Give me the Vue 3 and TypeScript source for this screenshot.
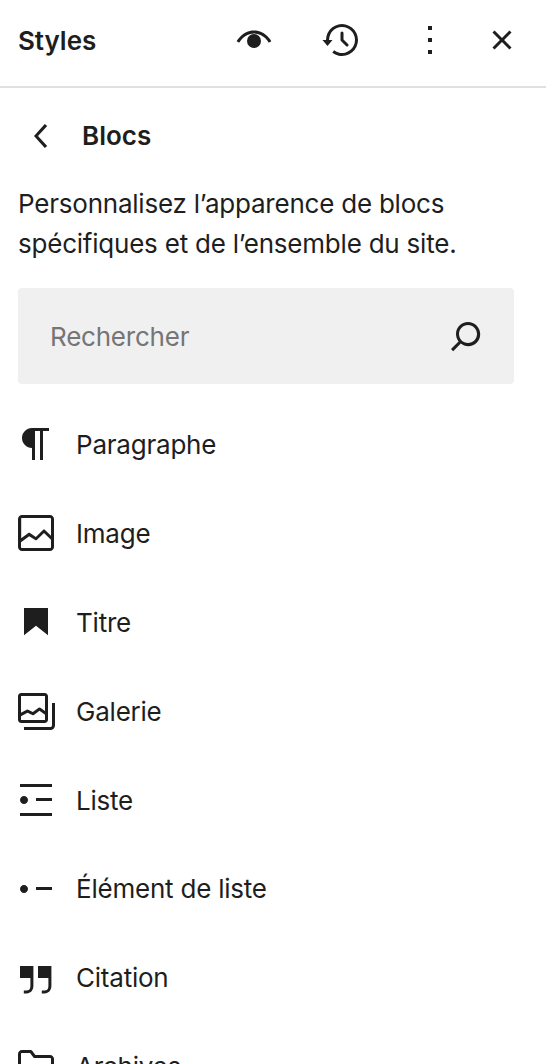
<script setup lang="ts">
interface Block { name: string; d: string }
const blocks: Block[] = [
  { name: 'Paragraphe', d: 'm9.99609 14v-.2251l.00391.0001v6.225h1.5v-14.5h2.5v14.5h1.5v-14.5h3v-1.5h-8.50391c-2.76142 0-5 2.23858-5 5 0 2.7614 2.23858 5 5 5z' },
  { name: 'Image', d: 'M19 3H5c-1.1 0-2 .9-2 2v14c0 1.1.9 2 2 2h14c1.1 0 2-.9 2-2V5c0-1.1-.9-2-2-2zM5 4.5h14c.3 0 .5.2.5.5v8.4l-3-2.9c-.3-.3-.8-.3-1 0L11.9 14 9 12c-.3-.2-.6-.2-.8 0l-3.6 2.6V5c-.1-.3.1-.5.4-.5zm14 15H5c-.3 0-.5-.2-.5-.5v-2.4l4.1-3 3 1.9c.3.2.7.2.9-.1L16 12l3.5 3.4V19c0 .3-.2.5-.5.5z' },
  { name: 'Titre', d: 'M6 5V18.5911L12 13.8473L18 18.5911V5H6Z' },
  { name: 'Galerie', d: 'M16.375 4.5H4.625a.125.125 0 0 0-.125.125v8.254l2.859-1.54a.75.75 0 0 1 .68-.016l2.384 1.142 2.89-2.074a.75.75 0 0 1 .874 0l2.313 1.66V4.625a.125.125 0 0 0-.125-.125Zm.125 9.398-2.75-1.975-2.813 2.02a.75.75 0 0 1-.76.067l-2.444-1.17L4.5 14.583v1.792c0 .069.056.125.125.125h11.75a.125.125 0 0 0 .125-.125v-2.477ZM4.625 3C3.728 3 3 3.728 3 4.625v11.75C3 17.273 3.728 18 4.625 18h11.75c.898 0 1.625-.727 1.625-1.625V4.625C18 3.728 17.273 3 16.375 3H4.625ZM20 8v11c0 .69-.31 1-.999 1H6v1.5h13.001c1.52 0 2.499-.982 2.499-2.5V8H20Z' },
  { name: 'Liste', d: 'M4 4v1.5h16V4H4zm8 8.5h8V11h-8v1.5zM4 20h16v-1.5H4V20zm4-8c0-1.1-.9-2-2-2s-2 .9-2 2 .9 2 2 2 2-.9 2-2z' },
  { name: 'Élément de liste', d: 'M12 11v1.5h8V11h-8zm-6-1c-1.1 0-2 .9-2 2s.9 2 2 2 2-.9 2-2-.9-2-2-2z' },
  { name: 'Citation', d: 'M13 6v6h5.2v4c0 .8-.2 1.4-.5 1.7-.6.6-1.6.6-2.5.5h-.3v1.5h.5c1 0 2.3-.1 3.3-1 .6-.6 1-1.6 1-2.8V6H13zm-9 6h5.2v4c0 .8-.2 1.4-.5 1.7-.6.6-1.6.6-2.5.5h-.3v1.5h.5c1 0 2.3-.1 3.3-1 .6-.6 1-1.6 1-2.8V6H4v6z' },
  { name: 'Archives', d: 'M5 3.5h4.4c.3 0 .5.1.6.3l1.7 2.2H19c1.1 0 2 .9 2 2V19c0 1.1-.9 2-2 2H5c-1.1 0-2-.9-2-2V5.5c0-1.1.9-2 2-2zm0 1.5c-.3 0-.5.2-.5.5V19c0 .3.2.5.5.5h14c.3 0 .5-.2.5-.5V8c0-.3-.2-.5-.5-.5h-7.7c-.2 0-.5-.1-.6-.3L9 5H5z' },
]
</script>

<template>
  <div class="panel">
    <header class="top">
      <h1 class="top-title">Styles</h1>
      <div class="tools">
        <svg class="icon" viewBox="0 0 24 24"><path d="M4 13c.67.34.67.34.67.34l.02-.04c.02-.03.08-.14.08-.14.07-.12.18-.3.33-.52.3-.43.75-1.01 1.36-1.6C7.67 9.88 9.5 8.75 12 8.75s4.33 1.13 5.54 2.29c.61.58 1.06 1.16 1.36 1.6.15.22.26.4.33.52l.08.14.02.04L20 13l.67-.34-.01-.02-.03-.05a10.500 10.500 0 0 0-.49-.79 13.900 13.900 0 0 0-1.56-1.84C17.17 8.62 15.01 7.25 12 7.25S6.830 8.620 5.420 9.960a13.900 13.900 0 0 0-1.560 1.840 10.500 10.500 0 0 0-.53.840l-.01.02L4 13zm8 3a3.500 3.500 0 1 0 0-7 3.500 3.500 0 0 0 0 7z" /></svg>
        <svg class="icon" viewBox="0 0 24 24"><path d="M5.500 12h1.750l-2.500 3-2.500-3H4a8 8 0 113.134 6.350l.907-1.194A6.500 6.500 0 105.500 12zm9.530 1.970l-2.280-2.280V8.500a.75.75 0 00-1.500 0V12a.747.747 0 00.218.529l2.500 2.500a.75.75 0 101.062-1.059z" /></svg>
        <svg class="icon" viewBox="0 0 24 24"><path d="M13 19h-2v-2h2v2zm0-6h-2v-2h2v2zm0-6h-2V5h2v2z" /></svg>
        <svg class="icon close" viewBox="0 0 24 24"><path d="M12 13.06l3.712 3.713 1.061-1.06L13.061 12l3.712-3.712-1.06-1.06L12 10.938 8.288 7.227l-1.061 1.06L10.939 12l-3.712 3.712 1.06 1.061L12 13.061z" /></svg>
      </div>
    </header>

    <div class="sub">
      <svg class="icon" viewBox="0 0 24 24"><path d="M14.600 7l-1.200-1L8 12l5.400 6 1.200-1-4.600-5z" /></svg>
      <h2 class="sub-title">Blocs</h2>
    </div>

    <p class="intro">Personnalisez l’apparence de blocs spécifiques et de l’ensemble du site.</p>

    <div class="search">
      <span class="placeholder">Rechercher</span>
      <svg class="icon" viewBox="0 0 24 24"><path d="M13 5c-3.300 0-6 2.700-6 6 0 1.400.5 2.700 1.300 3.700l-3.800 3.800 1.100 1.100 3.800-3.800c1 .8 2.300 1.300 3.700 1.300 3.300 0 6-2.700 6-6S16.300 5 13 5zm0 10.500c-2.500 0-4.500-2-4.500-4.500s2-4.500 4.500-4.500 4.500 2 4.500 4.500-2 4.500-4.500 4.500z" /></svg>
    </div>

    <ul class="list">
      <li v-for="b in blocks" :key="b.name" class="row">
        <svg class="icon" viewBox="0 0 24 24"><path :d="b.d" /></svg>
        <span class="row-label">{{ b.name }}</span>
      </li>
    </ul>
  </div>
</template>

<style scoped>
.panel {
  width: 546px;
  height: 1064px;
  overflow: hidden;
  background: #fff;
  color: #1e1e1e;
  font-family: Inter, "Liberation Sans", sans-serif;
  font-size: 26px;
  letter-spacing: -0.22px;
}
.icon {
  width: 48px;
  height: 48px;
  flex: none;
  fill: #1e1e1e;
  fill-rule: evenodd;
  display: block;
}
.top {
  height: 88px;
  box-sizing: border-box;
  border-bottom: 2px solid #e0e0e0;
  display: flex;
  align-items: center;
  justify-content: space-between;
  padding: 0 20px 6px 18px;
}
.top-title, .sub-title {
  margin: 0;
  font-size: 26px;
  font-weight: 600;
  letter-spacing: -0.05px;
}
.tools {
  display: flex;
  gap: 40px;
}
.close {
  margin-left: -16px;
}
.sub {
  height: 96px;
  display: flex;
  align-items: center;
  gap: 16px;
  padding-left: 18px;
}
.sub-title {
  margin-bottom: 2px;
  letter-spacing: 0;
}
.intro {
  margin: 0;
  padding: 0 18px;
  line-height: 40px;
}
.search {
  margin: 24px 32px 0 18px;
  height: 96px;
  background: #f0f0f0;
  border-radius: 4px;
  display: flex;
  align-items: center;
  justify-content: space-between;
  padding: 0 24px 0 32px;
}
.placeholder {
  color: #757575;
}
.list {
  list-style: none;
  margin: 16px 0 0;
  padding: 0 0 0 12px;
}
.row {
  height: 88.9px;
  display: flex;
  align-items: center;
  gap: 16px;
}
</style>

<style>
html, body { margin: 0; overflow: hidden; background: #fff; }
</style>
